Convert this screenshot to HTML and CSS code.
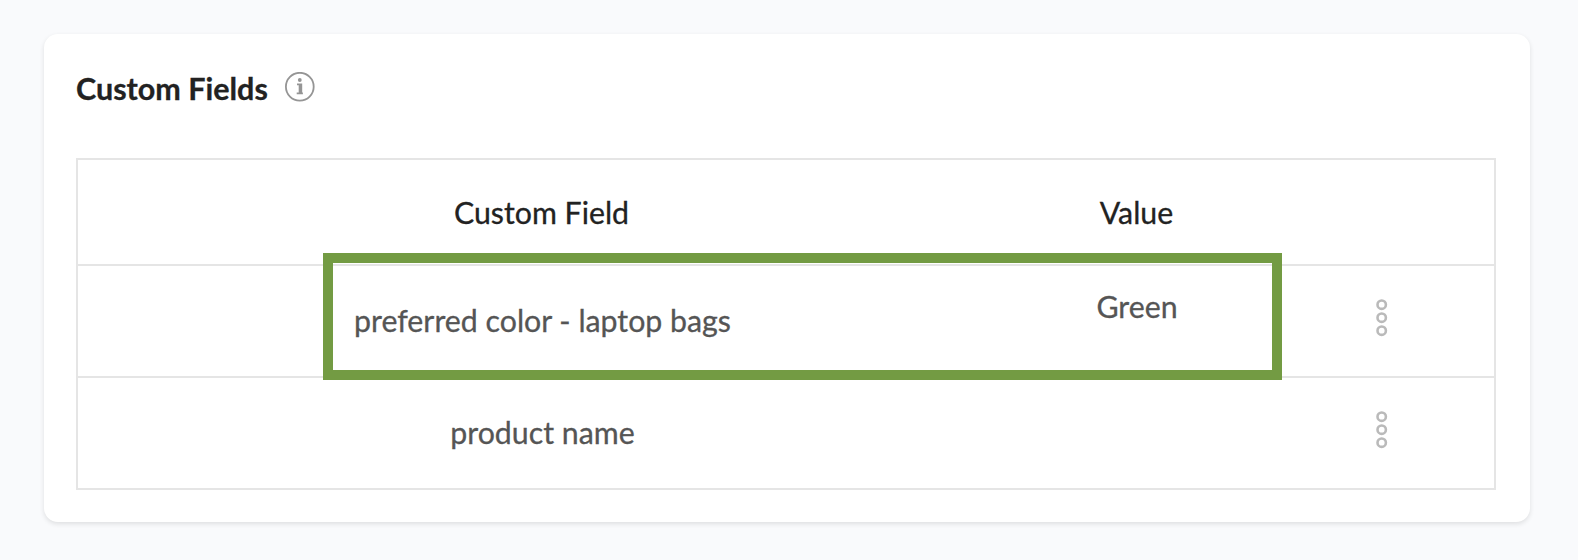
FILE: index.html
```html
<!DOCTYPE html>
<html lang="en">
<head>
<meta charset="utf-8">
<title>Custom Fields</title>
<link rel="stylesheet" href="styles.css">
</head>
<body>
<section class="card">
  <header class="card-header">
    <h2 class="title">Custom Fields</h2>
    <svg class="info" viewBox="0 0 30 30" width="30" height="30" fill="none" aria-label="Info">
      <circle cx="14.8" cy="14.7" r="13.9" stroke="#959595" stroke-width="1.8"/>
      <circle cx="14.8" cy="8" r="1.9" fill="#959595"/>
      <path d="M12 12.4h4.3v9M11.7 21.4h6.2" stroke="#959595" stroke-width="1.8"/>
      <path d="M15.1 12v9.3" stroke="#959595" stroke-width="2.8"/>
    </svg>
  </header>
  <div class="table">
    <div class="row row-head">
      <div class="cell"><span class="label">Custom Field</span></div>
      <div class="cell"><span class="label">Value</span></div>
      <div class="cell"></div>
    </div>
    <div class="row">
      <div class="cell cell-name"><span class="label">preferred color - laptop bags</span></div>
      <div class="cell cell-value"><span class="label">Green</span></div>
      <div class="cell cell-menu">
        <svg width="12" height="38" viewBox="0 0 12 38" fill="none" stroke="#bababa" stroke-width="2.6">
          <circle cx="5.7" cy="5.7" r="4.2"/><circle cx="5.7" cy="18.7" r="4.2"/><circle cx="5.7" cy="31.7" r="4.2"/>
        </svg>
      </div>
    </div>
    <div class="row">
      <div class="cell cell-name"><span class="label">product name</span></div>
      <div class="cell cell-value"></div>
      <div class="cell cell-menu">
        <svg width="12" height="38" viewBox="0 0 12 38" fill="none" stroke="#bababa" stroke-width="2.6">
          <circle cx="5.7" cy="5.7" r="4.2"/><circle cx="5.7" cy="18.7" r="4.2"/><circle cx="5.7" cy="31.7" r="4.2"/>
        </svg>
      </div>
    </div>
    <div class="highlight"></div>
  </div>
</section>
</body>
</html>
```

FILE: styles.css
```css
* { box-sizing: border-box; }

body {
  margin: 0;
  height: 560px;
  padding: 34px 48px 38px 44px;
  background: #f9fafc;
  font-family: Lato, sans-serif;
  font-size: 30.3px;
  line-height: 36px;
  color: #555;
  -webkit-text-stroke: 0.3px currentColor;
}

.card {
  height: 488px;
  padding: 32px 34px 32px 32px;
  background: #fff;
  border-radius: 14px;
  box-shadow: 0 2px 5px rgba(0, 0, 0, 0.11);
}

.card-header {
  display: flex;
  align-items: flex-start;
  gap: 17px;
  height: 92px;
}

.title {
  margin: 4px 0 0;
  font-size: 30.5px;
  font-weight: 700;
  line-height: 36px;
  color: #222;
}

.info { margin-top: 6px; }

.table {
  position: relative;
  border: 2px solid #e5e5e5;
}

.row {
  display: grid;
  grid-template-columns: 927px 263px 1fr;
  height: 112px;
  border-top: 2px solid #e5e5e5;
}

.row-head {
  height: 104px;
  border-top: 0;
  color: #222;
}

.cell {
  display: flex;
  align-items: center;
  justify-content: center;
}

.cell-name { padding: 0 0 2px 2px; }

.cell-value { padding: 0 0 30px 1px; }

.cell-menu { padding: 0 0 7px 1px; }

.label { white-space: nowrap; }

/* Callout frame drawn over the preferred color row */
.highlight {
  position: absolute;
  top: 93px;
  left: 245px;
  width: 959px;
  height: 127px;
  border: 10px solid #739b43;
}
```
